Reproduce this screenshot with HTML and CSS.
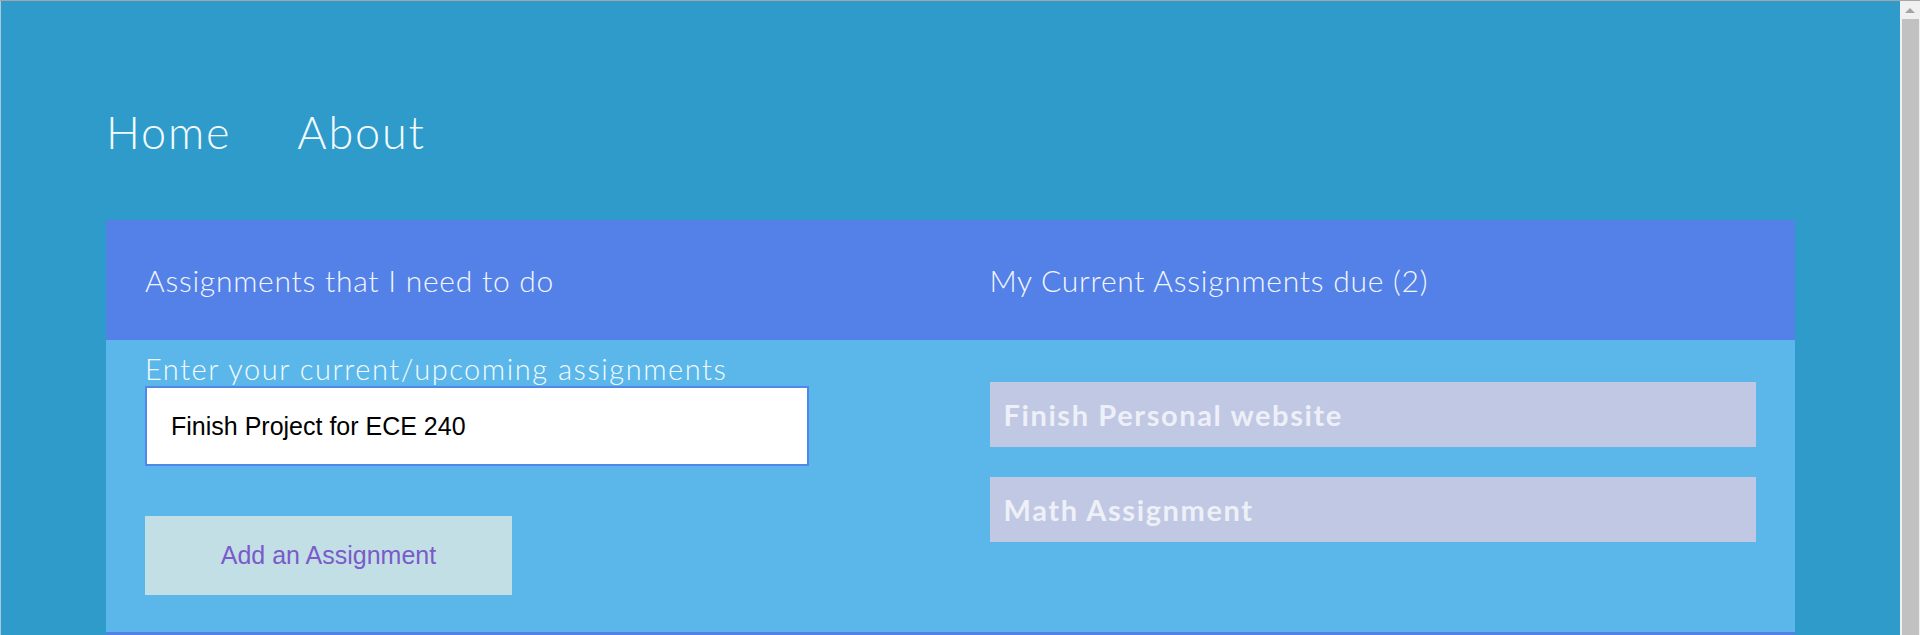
FILE: index.html
```html
<!DOCTYPE html>
<html lang="en">
<head>
<meta charset="utf-8">
<title>Assignments</title>
<link rel="stylesheet" href="styles.css">
</head>
<body>
<div class="window">
  <main class="page">
    <nav class="nav">
      <a class="nav-link" href="#">Home</a>
      <a class="nav-link" href="#">About</a>
    </nav>
    <section class="panel">
      <div class="panel-head">
        <h2 class="col-title">Assignments that I need to do</h2>
        <h2 class="col-title">My Current Assignments due (2)</h2>
      </div>
      <div class="panel-body">
        <form class="col form-col">
          <label class="field-label" for="assignment">Enter your current/upcoming assignments</label>
          <input class="field-input" id="assignment" type="text" value="Finish Project for ECE 240">
          <button class="add-btn" type="button">Add an Assignment</button>
        </form>
        <ul class="col list-col">
          <li class="item">Finish Personal website</li>
          <li class="item">Math Assignment</li>
        </ul>
      </div>
    </section>
  </main>
  <div class="scrollbar">
    <div class="sb-up"><span class="sb-arrow"></span></div>
    <div class="sb-thumb"></div>
  </div>
</div>
</body>
</html>
```

FILE: styles.css
```css
html, body {
  margin: 0;
  padding: 0;
  height: 635px;
  overflow: hidden;
  background: #2e9bca;
}

.window {
  display: flex;
  height: 635px;
  border-top: 1px solid #a6a6a6;
  box-sizing: border-box;
}

.page {
  flex: 1;
  min-width: 0;
  border-left: 1px solid #a9c9d9;
  padding: 0 105px;
  overflow: hidden;
  font-family: "Lato", "Open Sans", sans-serif;
}

.nav {
  display: flex;
  gap: 66px;
  margin-top: 109px;
  height: 45px;
  line-height: 45px;
}

.nav-link {
  font-size: 45px;
  font-weight: 300;
  letter-spacing: 1.8px;
  color: #f3fbff;
  text-decoration: none;
}

.panel {
  margin-top: 65px;
  border-bottom: 10px solid #5381e8;
}

.panel-head {
  display: flex;
  height: 120px;
  background: #5381e8;
}

.col-title {
  flex: 1;
  display: flex;
  align-items: center;
  margin: 0;
  padding: 0 39px;
  font-size: 30px;
  font-weight: 300;
  letter-spacing: 0.75px;
  color: #f3f6ff;
}

.panel-body {
  display: flex;
  background: #5bb7e9;
}

.col {
  flex: 1;
  margin: 0;
  padding: 0 39px;
  box-sizing: border-box;
}

.form-col {
  display: flex;
  flex-direction: column;
  align-items: flex-start;
  padding-top: 14px;
  padding-bottom: 37px;
}

.field-label {
  font-size: 29px;
  font-weight: 300;
  line-height: 29px;
  height: 29px;
  letter-spacing: 1.55px;
  color: #f3fbff;
}

.field-input {
  margin-top: 3px;
  width: 664px;
  height: 80px;
  box-sizing: border-box;
  border: 2px solid #4f88ea;
  outline: none;
  padding: 0 0 0 24px;
  font-family: "Liberation Sans", Arial, sans-serif;
  font-size: 25px;
  color: #000;
  background: #fff;
}

.add-btn {
  margin-top: 50px;
  width: 367px;
  height: 79px;
  border: none;
  background: #c2dfe6;
  font-family: "Liberation Sans", Arial, sans-serif;
  font-size: 25px;
  color: #7b5ac9;
}

.list-col {
  list-style: none;
  padding-top: 42px;
  display: flex;
  flex-direction: column;
  gap: 30px;
}

.item {
  height: 65px;
  display: flex;
  align-items: center;
  padding-left: 14px;
  background: #c0c8e4;
  font-size: 29px;
  font-weight: 700;
  letter-spacing: 1.6px;
  color: #eef0f7;
}

.scrollbar {
  width: 20px;
  display: flex;
  flex-direction: column;
  background: #f0f0f0;
}

.sb-up {
  height: 18px;
  display: flex;
  align-items: center;
  justify-content: center;
}

.sb-arrow {
  width: 0;
  height: 0;
  border-left: 5px solid transparent;
  border-right: 5px solid transparent;
  border-bottom: 5px solid #a3a3a3;
}

.sb-thumb {
  flex: 1;
  margin: 0 1px 0 2px;
  background: #c1c1c1;
}
```
